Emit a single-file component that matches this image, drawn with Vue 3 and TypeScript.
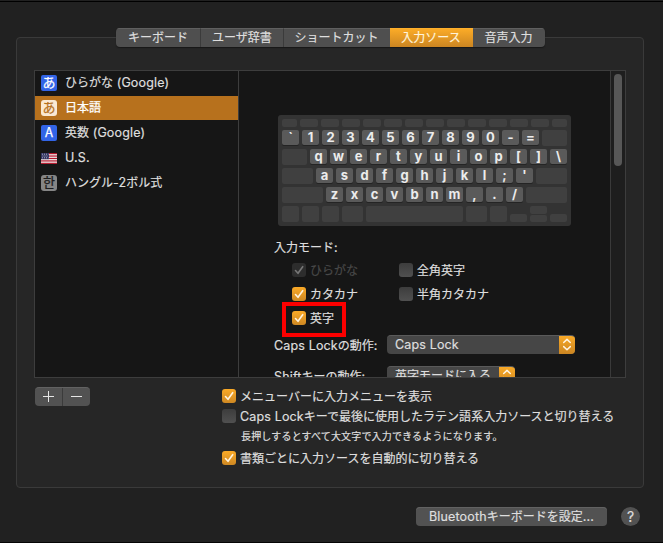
<script setup lang="ts">
import { h, type FunctionalComponent } from 'vue'

interface Source { label: string; glyph: string; kind: string }
interface Key { label?: string; w: number }

// Renders mixed text, giving Latin runs their own typeface
const Mixed: FunctionalComponent<{ text: string }> = (props) =>
  h('span', { class: 'mixed' },
    (props.text.match(/[\x20-\x7e]+|[^\x20-\x7e]+/g) ?? []).map((run: string) =>
      h('span', { class: /^[\x20-\x7e]/.test(run) ? 'latin' : 'kana' }, run)))
Mixed.props = ['text']

const tabs = [
  { label: 'キーボード', w: 85 },
  { label: 'ユーザ辞書', w: 83 },
  { label: 'ショートカット', w: 106 },
  { label: '入力ソース', w: 83 },
  { label: '音声入力', w: 72 },
]
const activeTab = '入力ソース'

const sources: Source[] = [
  { label: 'ひらがな (Google)', glyph: 'あ', kind: 'blue' },
  { label: '日本語', glyph: 'あ', kind: 'cream' },
  { label: '英数 (Google)', glyph: 'A', kind: 'blue' },
  { label: 'U.S.', glyph: '', kind: 'flag' },
  { label: 'ハングル-2ボル式', glyph: '한', kind: 'gray' },
]
const selected = '日本語'

const letters = (s: string): Key[] => s.split('').map((label) => ({ label, w: 17 }))
const rows: Key[][] = [
  [...letters('`1234567890-='), { w: 25 }],
  [{ w: 25 }, ...letters('qwertyuiop[]\\')],
  [{ w: 31 }, ...letters("asdfghjkl;'"), { w: 31 }],
  [{ w: 41 }, ...letters('zxcvbnm,./'), { w: 41 }],
]
const functionRow = [15, ...Array<number>(12).fill(18), 15]
const bottomRow = [17, 17, 17, 21, 97, 21, 17]

const modes = [
  { label: 'ひらがな', on: true, disabled: true },
  { label: '全角英字', on: false },
  { label: 'カタカナ', on: true },
  { label: '半角カタカナ', on: false },
  { label: '英字', on: true, marked: true },
]
const stripes = [0, 2, 4, 6, 8]
</script>

<template>
  <main class="window">
    <section class="group">
      <nav class="tabs">
        <button v-for="t in tabs" :key="t.label" class="tab" :class="{ active: t.label === activeTab }" :style="{ width: t.w + 'px' }">{{ t.label }}</button>
      </nav>

      <div class="panes">
        <ul class="sources">
          <li v-for="s in sources" :key="s.label" class="source" :class="{ selected: s.label === selected }">
            <svg v-if="s.kind === 'flag'" class="flag" width="16" height="11" viewBox="0 0 16 11">
              <rect width="16" height="11" fill="#f1eeee" />
              <rect v-for="y in stripes" :key="y" :y="y * 1.22" width="16" height="1.2" fill="#b5172c" />
              <rect width="8" height="6.2" fill="#30335f" />
              <path d="M1 1.2h6.500M1.500 3h6M1 4.800h6.500" stroke="#c9cada" stroke-width=".8" stroke-dasharray="1 1" />
            </svg>
            <span v-else class="badge" :class="s.kind">{{ s.glyph }}</span>
            <Mixed :text="s.label" />
          </li>
        </ul>

        <div class="detail">
          <div class="keyboard">
            <div class="keys short"><i v-for="(w, i) in functionRow" :key="i" class="key" :style="{ width: w + 'px' }" /></div>
            <div v-for="(r, i) in rows" :key="i" class="keys">
              <i v-for="(k, j) in r" :key="j" class="key" :class="{ lit: k.label }" :style="{ width: k.w + 'px' }">{{ k.label }}</i>
            </div>
            <div class="keys">
              <i v-for="(w, i) in bottomRow" :key="i" class="key" :style="{ width: w + 'px' }" />
              <i class="key arrow" />
              <span class="updown"><i class="key arrow" /><i class="key arrow" /></span>
              <i class="key arrow" />
            </div>
          </div>

          <div class="heading"><Mixed text="入力モード:" /></div>
          <div class="modes">
            <label v-for="m in modes" :key="m.label" class="check" :class="{ disabled: m.disabled, marked: m.marked }">
              <span class="box" :class="{ on: m.on }">
                <svg v-if="m.on" width="14" height="14" viewBox="0 0 14 14"><path d="M3.500 7.500 6 10.300 10.700 3.700" /></svg>
              </span>
              <Mixed :text="m.label" />
            </label>
          </div>
          <div class="field first">
            <Mixed class="field-label" text="Caps Lockの動作:" />
            <div class="select wide"><Mixed text="Caps Lock" /><span class="stepper"><svg width="16" height="19" viewBox="0 0 16 19"><path d="M4.700 7.500 8 4.400 11.300 7.500M4.700 11.600 8 14.700 11.300 11.600" /></svg></span></div>
          </div>
          <div class="field">
            <Mixed class="field-label" text="Shiftキーの動作:" />
            <div class="select"><Mixed text="英字モードに入る" /><span class="stepper"><svg width="16" height="19" viewBox="0 0 16 19"><path d="M4.700 7.500 8 4.400 11.300 7.500M4.700 11.600 8 14.700 11.300 11.600" /></svg></span></div>
          </div>
        </div>
        <div class="track"><div class="thumb" /></div>
      </div>

      <div class="below">
        <div class="plusminus">
          <button><svg width="27" height="19" viewBox="0 0 27 19"><path d="M8 9.500h11M13.500 4v11" /></svg></button>
          <button><svg width="27" height="19" viewBox="0 0 27 19"><path d="M8 9.500h11" /></svg></button>
        </div>
        <div class="options">
          <label class="check"><span class="box on"><svg width="14" height="14" viewBox="0 0 14 14"><path d="M3.500 7.500 6 10.300 10.700 3.700" /></svg></span><Mixed text="メニューバーに入力メニューを表示" /></label>
          <label class="check"><span class="box" /><Mixed text="Caps Lockキーで最後に使用したラテン語系入力ソースと切り替える" /></label>
          <p class="note">長押しするとすべて大文字で入力できるようになります。</p>
          <label class="check"><span class="box on"><svg width="14" height="14" viewBox="0 0 14 14"><path d="M3.500 7.500 6 10.300 10.700 3.700" /></svg></span><Mixed text="書類ごとに入力ソースを自動的に切り替える" /></label>
        </div>
      </div>
    </section>

    <footer class="footer">
      <button class="push"><Mixed text="Bluetoothキーボードを設定..." /></button>
      <button class="help">?</button>
    </footer>
  </main>
</template>

<style>
body { margin: 0; background: #212121; }
.mixed { white-space: pre; }
.latin { font-family: Inter, sans-serif; font-size: 12.5px; letter-spacing: .15px; }
</style>

<style scoped>
* { box-sizing: border-box; }
button { border: 0; padding: 0; margin: 0; color: inherit; font: inherit; background: none; }
.window {
  width: 663px; height: 543px; overflow: hidden;
  padding: 37px 19px 0 16px;
  border-bottom: 1px solid #050505;
  background: linear-gradient(#212121 1px, #000 1px, #000 2px, #212121 2px);
  color: #dedede;
  font: 12px/18px "Noto Sans CJK JP", "Noto Sans CJK KR", sans-serif;
  -webkit-text-stroke: .2px;
}
.group { height: 451px; border: 1px solid #3a3a3a; border-radius: 4px; background: #262626; padding: 0 17px; }
.tabs { display: flex; width: 429px; height: 19px; margin: -10px 0 0 82px; border-radius: 4px; overflow: hidden; background: #4f4f4f; box-shadow: 0 1px 1px #181818; }
.tab { flex: none; height: 19px; line-height: 16px; padding: 0 0 2px; border-top: 1px solid #606060; border-right: 1px solid #3b3b3b; text-align: center; }
.tab:nth-child(n+3) { border-right: 0; padding-right: 1px; }
.tab.active { background: linear-gradient(#fbab27, #cb8522); border-top-color: #ffb02b; color: #fff3da; }
.panes { display: flex; width: 592px; height: 308px; margin-top: 23px; border: 1px solid #3d3d3d; background: #161616; overflow: hidden; }
.sources { flex: none; width: 204px; margin: 0; padding: 0; list-style: none; border-right: 1px solid #3d3d3d; display: flex; flex-direction: column; gap: 1px; }
.source { height: 24px; display: flex; align-items: center; gap: 8px; padding-left: 6px; }
.source .mixed { padding-bottom: 2px; }
.source.selected { background: #b7711d; color: #fff; -webkit-text-stroke: .25px; }
.badge { width: 16px; height: 16px; border-radius: 2px; text-align: center; font-size: 13px; line-height: 14px; -webkit-text-stroke: .25px; }
.blue { background: #3264e6; color: #fff; }
.cream { background: #fae9d3; color: #b7711d; border-radius: 3px; }
.gray { background: #858585; color: #1b1b1b; border-radius: 3px; }
.detail { flex: none; width: 371px; padding: 44px 0 0 35px; }
.keyboard { width: 293px; height: 111px; margin-left: 4px; padding: 4px; border-radius: 3px; background: #333; display: flex; flex-direction: column; gap: 3px; -webkit-text-stroke: 0; }
.keys { display: flex; gap: 3px; height: 16px; }
.keys.short { height: 8px; }
.key { flex: none; height: 100%; border-radius: 2px; background: #404040; font: 700 13px/15px Inter, sans-serif; text-align: center; color: #ececec; }
.key.lit { height: 15px; background: #5a5a5a; box-shadow: 0 1px 0 #242424; }
.key.arrow { width: 17px; height: 8px; align-self: flex-end; }
.updown { display: flex; flex-direction: column; }
.updown .arrow + .arrow { box-shadow: inset 0 1px 0 #333; }
.heading { height: 18px; margin-top: 12px; }
.modes { display: grid; grid-template-columns: 107px 120px; grid-auto-rows: 24px; margin: 2px 0 0 18px; }
.check { display: flex; align-items: center; gap: 4px; position: relative; }
.check.disabled { color: #484848; }
.check.marked::after { content: ''; box-sizing: border-box; position: absolute; left: -10px; top: -4px; width: 64px; height: 35px; border: 4px solid #fc0000; }
.box { flex: none; width: 14px; height: 14px; border-radius: 3px; background: linear-gradient(#3d3d3d, #505050); }
.box.on { background: linear-gradient(#fbaa27, #ce8823); }
.box svg { display: block; fill: none; stroke: #fff3df; stroke-width: 1.6; stroke-linecap: round; stroke-linejoin: round; }
.disabled .box.on { background: #2d2d2d; }
.disabled .box svg { stroke: #777; }
.field { display: flex; align-items: center; height: 19px; margin-top: 12px; }
.field.first { margin-top: 5px; }
.field-label { width: 113px; flex: none; padding-top: 1px; }
.select { position: relative; display: flex; align-items: center; width: 128px; height: 19px; padding: 0 0 2px 8px; border-radius: 4px; overflow: hidden; background: #464646; border-top: 1px solid #5a5a5a; }
.select.wide { width: 188px; }
.stepper { position: absolute; right: 0; top: -1px; width: 16px; height: 19px; background: linear-gradient(#fbab27, #cb8522); }
.stepper svg { display: block; fill: none; stroke: #fff3df; stroke-width: 1.5; stroke-linecap: round; stroke-linejoin: round; }
.track { flex: none; width: 16px; border-left: 1px solid #3a3a3a; background: #1e1e1e; padding: 3px 0 0 3px; }
.thumb { width: 8px; height: 92px; border-radius: 4px; background: #575757; }
.below { display: flex; margin-top: 9px; }
.plusminus { display: flex; width: 55px; height: 19px; margin-left: 1px; border-radius: 4px; overflow: hidden; background: #525252; border-top: 1px solid #626262; }
.plusminus button { width: 27px; height: 19px; margin-top: -1px; }
.plusminus button:first-child { width: 28px; border-right: 1px solid #3b3b3b; }
.plusminus svg { display: block; stroke: #e6e6e6; stroke-width: 1; fill: none; }
.options { margin-left: 132px; }
.options .check { height: 20px; margin-top: -1px; }
.options .check + .check { margin-top: 0; }
.note { margin: 1px 0 4px 19px; height: 18px; font-size: 10px; letter-spacing: .17px; white-space: nowrap; }
.options .note + .check { margin-top: -1px; }
.footer { display: flex; justify-content: flex-end; gap: 14px; padding-right: 4px; margin-top: 19px; }
.push { width: 191px; height: 19px; border-radius: 4px; background: #525252; box-shadow: inset 0 1px #626262; }
.help { width: 19px; height: 19px; border-radius: 50%; background: #525252; font: 400 14px/19px Inter, sans-serif; }
</style>
